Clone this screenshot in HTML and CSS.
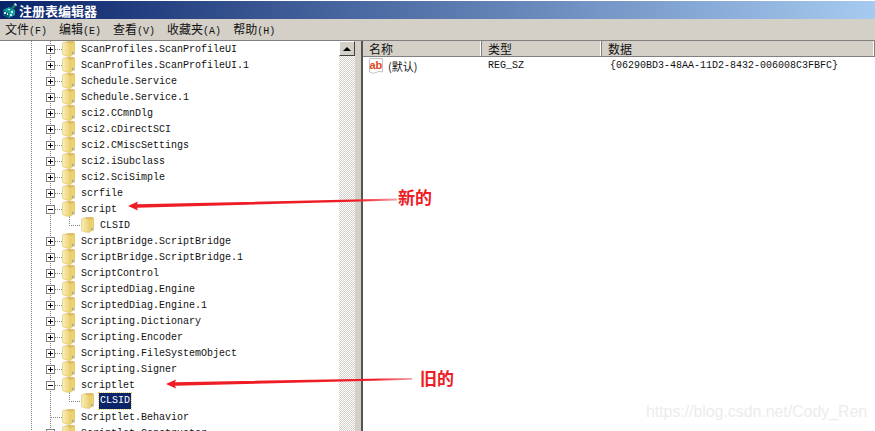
FILE: index.html
```html
<!DOCTYPE html>
<html lang="zh-CN">
<head>
  <meta charset="UTF-8">
  <title>注册表编辑器</title>
  <link rel="stylesheet" href="styles.css">
</head>
<body>

<svg class="defs" width="0" height="0">
  <defs>
    <linearGradient id="folder-front" x1="0" y1="0" x2="1" y2="0">
      <stop offset="0" stop-color="#fbefb0"/>
      <stop offset="1" stop-color="#e9cf78"/>
    </linearGradient>
    <linearGradient id="arrow-fade" x1="0" y1="0" x2="1" y2="0">
      <stop offset="0" stop-color="#ee1c25"/>
      <stop offset="0.85" stop-color="#ee1c25"/>
      <stop offset="1" stop-color="#f8a0a4"/>
    </linearGradient>
    <symbol id="folder" viewBox="0 0 13 16">
      <path d="M3 1.5 L6 0.5 H12 L12.5 1.5 V13 L7 15 Z" fill="#e2bf58" stroke="#cfae50" stroke-width="0.6"/>
      <path d="M0.5 2 L3.5 1 L8.5 2.5 V15.5 L4 15 L0.5 13.5 Z" fill="url(#folder-front)" stroke="#d8c070" stroke-width="0.6"/>
      <path d="M8.5 3 L12.5 2 V13 L8.5 15.5 Z" fill="#efd26c"/>
      <path d="M10 11 h1.5 v2 h-1.5 Z" fill="#6fb0d8"/>
    </symbol>
  </defs>
</svg>

<div class="window">
  <div class="titlebar">
    <svg class="app-icon" width="16" height="16" viewBox="0 0 16 16">
      <path d="M1 8 L7 5 L13 8 V13 L7 16 L1 13 Z" fill="#17a0a0"/>
      <path d="M1 8 L7 11 V16 L1 13 Z" fill="#0b5a78"/>
      <path d="M2 10 h2 v2 h-2 Z M5 11 h1 v2 h-1 Z M9 9 h2 v2 h-2 Z M8 12 h2 v2 h-2 Z M6 7 h2 v1 h-2 Z" fill="#c4ecec"/>
      <path d="M8 7 L13 1 L15 3 L10 8 Z" fill="#1b7f6c"/>
      <path d="M12 2 L13 1 L15 3 L14 4 Z" fill="#e8f4f0"/>
    </svg>
    <span>注册表编辑器</span>
  </div>

  <div class="menubar">
    <span class="menu-item">文件<i>(F)</i></span>
    <span class="menu-item">编辑<i>(E)</i></span>
    <span class="menu-item">查看<i>(V)</i></span>
    <span class="menu-item">收藏夹<i>(A)</i></span>
    <span class="menu-item">帮助<i>(H)</i></span>
  </div>

  <div class="panes">
    <div class="tree-pane">
      <div class="tree">
        <div class="row"><b class="box plus"></b><svg class="folder"><use href="#folder"/></svg><span>ScanProfiles.ScanProfileUI</span></div>
        <div class="row"><b class="box plus"></b><svg class="folder"><use href="#folder"/></svg><span>ScanProfiles.ScanProfileUI.1</span></div>
        <div class="row"><b class="box plus"></b><svg class="folder"><use href="#folder"/></svg><span>Schedule.Service</span></div>
        <div class="row"><b class="box plus"></b><svg class="folder"><use href="#folder"/></svg><span>Schedule.Service.1</span></div>
        <div class="row"><b class="box plus"></b><svg class="folder"><use href="#folder"/></svg><span>sci2.CCmnDlg</span></div>
        <div class="row"><b class="box plus"></b><svg class="folder"><use href="#folder"/></svg><span>sci2.cDirectSCI</span></div>
        <div class="row"><b class="box plus"></b><svg class="folder"><use href="#folder"/></svg><span>sci2.CMiscSettings</span></div>
        <div class="row"><b class="box plus"></b><svg class="folder"><use href="#folder"/></svg><span>sci2.iSubclass</span></div>
        <div class="row"><b class="box plus"></b><svg class="folder"><use href="#folder"/></svg><span>sci2.SciSimple</span></div>
        <div class="row"><b class="box plus"></b><svg class="folder"><use href="#folder"/></svg><span>scrfile</span></div>
        <div class="row"><b class="box"></b><svg class="folder"><use href="#folder"/></svg><span>script</span></div>
        <div class="row child"><svg class="folder"><use href="#folder"/></svg><span>CLSID</span></div>
        <div class="row"><b class="box plus"></b><svg class="folder"><use href="#folder"/></svg><span>ScriptBridge.ScriptBridge</span></div>
        <div class="row"><b class="box plus"></b><svg class="folder"><use href="#folder"/></svg><span>ScriptBridge.ScriptBridge.1</span></div>
        <div class="row"><b class="box plus"></b><svg class="folder"><use href="#folder"/></svg><span>ScriptControl</span></div>
        <div class="row"><b class="box plus"></b><svg class="folder"><use href="#folder"/></svg><span>ScriptedDiag.Engine</span></div>
        <div class="row"><b class="box plus"></b><svg class="folder"><use href="#folder"/></svg><span>ScriptedDiag.Engine.1</span></div>
        <div class="row"><b class="box plus"></b><svg class="folder"><use href="#folder"/></svg><span>Scripting.Dictionary</span></div>
        <div class="row"><b class="box plus"></b><svg class="folder"><use href="#folder"/></svg><span>Scripting.Encoder</span></div>
        <div class="row"><b class="box plus"></b><svg class="folder"><use href="#folder"/></svg><span>Scripting.FileSystemObject</span></div>
        <div class="row"><b class="box plus"></b><svg class="folder"><use href="#folder"/></svg><span>Scripting.Signer</span></div>
        <div class="row"><b class="box"></b><svg class="folder"><use href="#folder"/></svg><span>scriptlet</span></div>
        <div class="row child"><svg class="folder"><use href="#folder"/></svg><span class="selected">CLSID</span></div>
        <div class="row leaf"><svg class="folder"><use href="#folder"/></svg><span>Scriptlet.Behavior</span></div>
        <div class="row"><b class="box plus"></b><svg class="folder"><use href="#folder"/></svg><span>Scriptlet.Constructor</span></div>
      </div>
      <div class="scrollbar">
        <div class="scroll-btn"></div>
      </div>
    </div>

    <div class="splitter"></div>

    <div class="list-pane">
      <div class="list-head">
        <div class="col col-name">名称</div>
        <div class="col col-type">类型</div>
        <div class="col col-data">数据</div>
      </div>
      <div class="list-row">
        <div class="col-name cell-name">
          <svg class="ab-icon" width="16" height="16" viewBox="0 0 16 16">
            <path d="M1.5 0.5 H14.5 V14 Q11 12.5 8 14.5 T1.5 14 Z" fill="#fff" stroke="#c4c4c4"/>
            <text x="1.5" y="10.5" class="ab-text">ab</text>
          </svg>
          <span class="default-name">(默认)</span>
        </div>
        <div class="col-type mono">REG_SZ</div>
        <div class="col-data mono">{06290BD3-48AA-11D2-8432-006008C3FBFC}</div>
      </div>
    </div>
  </div>
</div>

<!-- red notes drawn on top of the screenshot -->
<svg class="arrows" width="875" height="431" viewBox="0 0 875 431">
  <path d="M128 206 L138 201.5 L137 204.2 L397 198.6 V200.4 L137 207.8 L138 210.5 Z" fill="url(#arrow-fade)"/>
  <path d="M166 384 L176 379.5 L175 382.2 L412 378 V379.8 L175 385.8 L176 388.5 Z" fill="url(#arrow-fade)"/>
</svg>
<div class="note note-new">新的</div>
<div class="note note-old">旧的</div>
<div class="watermark">https://blog.csdn.net/Cody_Ren</div>

</body>
</html>
```

FILE: styles.css
```css
html, body {
  margin: 0;
  padding: 0;
  height: 431px;
  overflow: hidden;
  background-color: #fff;
}
.defs {
  position: absolute;
}
.window {
  width: 875px;
  height: 431px;
  display: flex;
  flex-direction: column;
  font-family: "Liberation Mono", monospace;
  font-size: 10px;
  color: #111;
}
.titlebar {
  height: 18px;
  margin-top: 1px;
  flex: none;
  display: flex;
  align-items: center;
  gap: 1px;
  padding-left: 2px;
  background: linear-gradient(to right, #0a246a, #a6caf0);
  color: #fff;
  font-family: "Noto Sans CJK SC", sans-serif;
  font-size: 13px;
  font-weight: bold;
}
.menubar {
  height: 19px;
  padding-bottom: 2px;
  flex: none;
  display: flex;
  align-items: center;
  background-color: #d4d0c8;
  font-family: "Noto Sans CJK SC", sans-serif;
  font-size: 12px;
}
.menu-item {
  padding: 0 6px 0 5px;
  margin-right: 1px;
}
.menu-item i {
  font-family: "Liberation Mono", monospace;
  font-size: 10px;
  font-style: normal;
}
.panes {
  flex: 1;
  display: flex;
  min-height: 0;
  border-top: 1px solid #808080;
}
.tree-pane {
  width: 355px;
  flex: none;
  display: flex;
  overflow: hidden;
  background-color: #fff;
}
.tree {
  flex: 1;
  overflow: hidden;
  /* dotted guide lines of the two outer tree levels */
  background-image:
    repeating-linear-gradient(to bottom, #808080 0 1px, transparent 1px 2px),
    repeating-linear-gradient(to bottom, #808080 0 1px, transparent 1px 2px);
  background-size: 1px 100%;
  background-position: 31px 0, 50px 0;
  background-repeat: no-repeat;
}
.row {
  height: 16px;
  display: flex;
  align-items: center;
  padding-left: 46px;
  white-space: nowrap;
  /* dotted stub between the box and the folder */
  background-image: repeating-linear-gradient(to right, #808080 0 1px, transparent 1px 2px);
  background-size: 7px 1px;
  background-position: 55px 8px;
  background-repeat: no-repeat;
}
.row span {
  line-height: 14px;
  padding: 2px 1px 0;
}
.box {
  width: 7px;
  height: 7px;
  flex: none;
  border: 1px solid #808080;
  background: linear-gradient(#000, #000) center / 5px 1px no-repeat, #fff;
}
.box.plus {
  background:
    linear-gradient(#000, #000) center / 5px 1px no-repeat,
    linear-gradient(#000, #000) center / 1px 5px no-repeat,
    #fff;
}
.folder {
  width: 13px;
  height: 16px;
  flex: none;
  margin-left: 7px;
  margin-right: 5px;
  overflow: visible;
}
.row.leaf {
  padding-left: 55px;
  background-size: 11px 1px;
  background-position: 51px 8px;
}
.row.child {
  padding-left: 62px;
  background-image:
    repeating-linear-gradient(to right, #808080 0 1px, transparent 1px 2px),
    repeating-linear-gradient(to bottom, #808080 0 1px, transparent 1px 2px);
  background-size: 12px 1px, 1px 8px;
  background-position: 69px 8px, 69px 0;
}
.row.child .folder {
  margin-left: 19px;
  margin-right: 5px;
}
.row .selected {
  padding: 1px 1px;
  background-color: #0a246a;
  color: #fff;
  outline: 1px dotted #e8d060;
}
.scrollbar {
  width: 16px;
  flex: none;
  background-color: #fff;
  background-image: conic-gradient(#d4d0c8 25%, #fff 0 50%, #d4d0c8 0 75%, #fff 0);
  background-size: 2px 2px;
}
.scroll-btn {
  height: 15px;
  box-sizing: border-box;
  background-color: #d4d0c8;
  border: 1px solid;
  border-color: #fff #404040 #404040 #fff;
  display: flex;
  align-items: center;
  justify-content: center;
}
.scroll-btn::before {
  content: "";
  border-left: 4px solid transparent;
  border-right: 4px solid transparent;
  border-bottom: 4px solid #000;
}
.splitter {
  width: 6px;
  flex: none;
  background-color: #d4d0c8;
}
.list-pane {
  flex: 1;
  border-left: 2px solid #555;
  background-color: #fff;
  overflow: hidden;
}
.list-head {
  height: 15px;
  display: flex;
  background-color: #d4d0c8;
  border-bottom: 1px solid #808080;
  font-family: "Noto Sans CJK SC", sans-serif;
  font-size: 12px;
}
.col {
  box-sizing: border-box;
  line-height: 15px;
  padding-left: 6px;
  border-right: 1px solid #808080;
  box-shadow: inset -1px 0 0 #fff;
}
.col-name {
  width: 119px;
  flex: none;
}
.col-type {
  width: 120px;
  flex: none;
}
.col-data {
  flex: 1;
}
.list-row {
  height: 17px;
  display: flex;
  align-items: center;
}
.cell-name {
  display: flex;
  align-items: center;
  gap: 4px;
  padding-left: 5px;
  box-sizing: border-box;
}
.mono {
  padding-left: 6px;
  box-sizing: border-box;
}
.mono.col-data {
  padding-left: 8px;
}
.default-name {
  font-family: "Noto Sans CJK SC", sans-serif;
  font-size: 11px;
}
.ab-text {
  font-family: "Liberation Sans", sans-serif;
  font-size: 11px;
  font-weight: bold;
  fill: #e0481c;
}
.arrows {
  position: absolute;
  left: 0;
  top: 0;
}
.note {
  position: absolute;
  font-family: "Noto Sans CJK SC", sans-serif;
  font-size: 17px;
  font-weight: bold;
  line-height: 20px;
  color: #ee1c25;
}
.note-new {
  left: 398px;
  top: 187px;
}
.note-old {
  left: 420px;
  top: 368px;
}
.watermark {
  position: absolute;
  left: 646px;
  top: 403px;
  font-family: "Liberation Sans", sans-serif;
  font-size: 16px;
  letter-spacing: -0.07px;
  color: #ececec;
}
```
